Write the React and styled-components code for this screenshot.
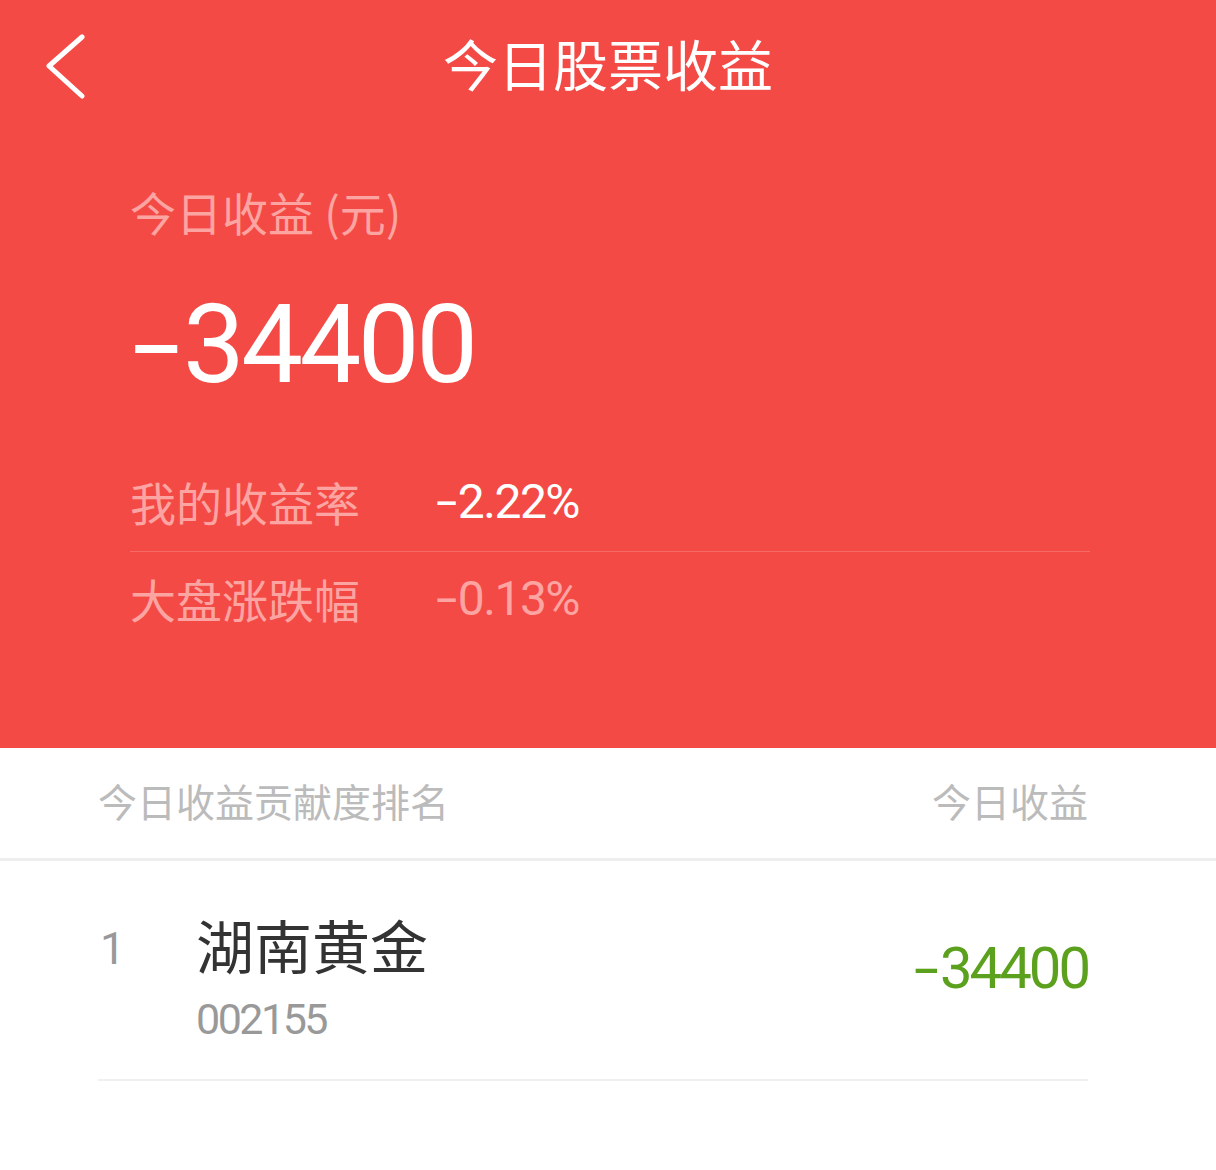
import styled, { createGlobalStyle } from 'styled-components';

const GlobalStyle = createGlobalStyle`
  html, body {
    margin: 0;
    padding: 0;
    background: #ffffff;
  }
  body {
    font-family: Roboto, 'Noto Sans CJK SC', sans-serif;
  }
`;

const Page = styled.div`
  width: 1216px;
  min-height: 1170px;
  background: #ffffff;
`;

const RedPanel = styled.section`
  background: #f44a46;
  height: 748px;
  display: flex;
  flex-direction: column;
`;

const TopBar = styled.header`
  height: 134px;
  display: grid;
  grid-template-columns: 1fr auto 1fr;
  align-items: center;
  padding: 0 44px;
`;

const BackButton = styled.button`
  border: none;
  background: none;
  padding: 0;
  width: 46px;
  height: 70px;
  display: flex;
  align-items: center;
  cursor: pointer;
`;

const Title = styled.h1`
  margin: 0 0 10px;
  color: #ffffff;
  font-family: 'Noto Sans CJK SC', sans-serif;
  font-weight: 400;
  font-size: 55px;
  line-height: 66px;
`;

const Summary = styled.div`
  padding: 0 126px 0 130px;
`;

const SummaryLabel = styled.div`
  margin-top: 50px;
  color: #fba4a1;
  font-family: 'Noto Sans CJK SC', sans-serif;
  font-size: 46px;
  line-height: 55px;
`;

const BigNumber = styled.div`
  margin-top: 48px;
  color: #ffffff;
  font-family: Roboto, sans-serif;
  font-size: 110px;
  line-height: 115px;
  letter-spacing: -3.5px;
  padding-left: 2px;
`;

// the sign in this app's number font is a long dash; stretch the hyphen to match
const Sign = styled.span`
  display: inline-block;
  transform: scaleX(${(p) => p.$stretch || 1.5});
  transform-origin: left center;
  margin-right: ${(p) => p.$gap || 0}px;
`;

const StatList = styled.div`
  margin-top: 51px;
`;

const StatRow = styled.div`
  height: 98px;
  display: flex;
  align-items: center;
  border-bottom: ${(p) => (p.$divider ? '1px solid rgba(255, 255, 255, 0.18)' : 'none')};
`;

const StatLabel = styled.span`
  width: 306px;
  color: #fba4a1;
  font-family: 'Noto Sans CJK SC', sans-serif;
  font-size: 46px;
  line-height: 55px;
  margin-bottom: ${(p) => (p.$lift ? 6 : 2)}px;
`;

const StatValue = styled.span`
  color: ${(p) => (p.$bright ? '#ffffff' : '#fba4a1')};
  font-family: Roboto, sans-serif;
  font-size: 48px;
  line-height: 55px;
  letter-spacing: -1.5px;
  margin-bottom: ${(p) => (p.$lift ? 6 : 2)}px;
`;

const ListHeader = styled.div`
  height: 110px;
  display: flex;
  align-items: center;
  justify-content: space-between;
  padding: 0 128px 0 98px;
  border-bottom: 3px solid #eeeeee;
  color: #bbbbbb;
  font-family: 'Noto Sans CJK SC', sans-serif;
  font-size: 39px;
  line-height: 48px;

  & > span {
    margin-bottom: 6px;
  }
`;

const StockRow = styled.div`
  height: 218px;
  margin: 0 128px 0 98px;
  display: flex;
  align-items: center;
  justify-content: space-between;
  border-bottom: 2px solid #f0f0f0;
`;

const StockInfo = styled.div`
  display: grid;
  grid-template-columns: 98px auto;
  align-items: center;
  row-gap: 11px;
  margin-top: 6px;
`;

const Rank = styled.span`
  color: #999999;
  font-family: Roboto, sans-serif;
  font-size: 45px;
  line-height: 70px;
  padding: 11px 0 0 2px;
`;

const StockName = styled.span`
  color: #333333;
  font-family: 'Noto Sans CJK SC', sans-serif;
  font-size: 58px;
  line-height: 70px;
`;

const StockCode = styled.span`
  grid-column: 2;
  color: #999999;
  font-family: Roboto, sans-serif;
  font-size: 43px;
  line-height: 48px;
  letter-spacing: -2.5px;
`;

const StockProfit = styled.span`
  color: #5ca11e;
  font-family: Roboto, sans-serif;
  font-size: 58px;
  line-height: 70px;
  letter-spacing: -3px;
  margin-bottom: 4px;
`;

const BackIcon = () => (
  <svg width="44" height="66" viewBox="0 0 44 66" fill="none">
    <polyline points="38,3 5,32 38,62" stroke="#ffffff" strokeWidth="5" strokeLinecap="round" strokeLinejoin="round" />
  </svg>
);

const stats = [
  { label: '我的收益率', value: '2.22%', bright: true },
  { label: '大盘涨跌幅', value: '0.13%', bright: false },
];

export default function App() {
  return (
    <Page>
      <GlobalStyle />
      <RedPanel>
        <TopBar>
          <BackButton aria-label="返回">
            <BackIcon />
          </BackButton>
          <Title>今日股票收益</Title>
          <span />
        </TopBar>
        <Summary>
          <SummaryLabel>今日收益 (元)</SummaryLabel>
          <BigNumber>
            <Sign $stretch={1.6} $gap={24}>-</Sign>34400
          </BigNumber>
          <StatList>
            {stats.map((s, i) => (
              <StatRow key={s.label} $divider={i < stats.length - 1}>
                <StatLabel $lift={i > 0}>{s.label}</StatLabel>
                <StatValue $bright={s.bright} $lift={i > 0}>
                  <Sign $stretch={1.6} $gap={10}>-</Sign>{s.value}
                </StatValue>
              </StatRow>
            ))}
          </StatList>
        </Summary>
      </RedPanel>
      <ListHeader>
        <span>今日收益贡献度排名</span>
        <span>今日收益</span>
      </ListHeader>
      <StockRow>
        <StockInfo>
          <Rank>1</Rank>
          <StockName>湖南黄金</StockName>
          <StockCode>002155</StockCode>
        </StockInfo>
        <StockProfit>
          <Sign $stretch={1.55} $gap={13}>-</Sign>34400
        </StockProfit>
      </StockRow>
    </Page>
  );
}
